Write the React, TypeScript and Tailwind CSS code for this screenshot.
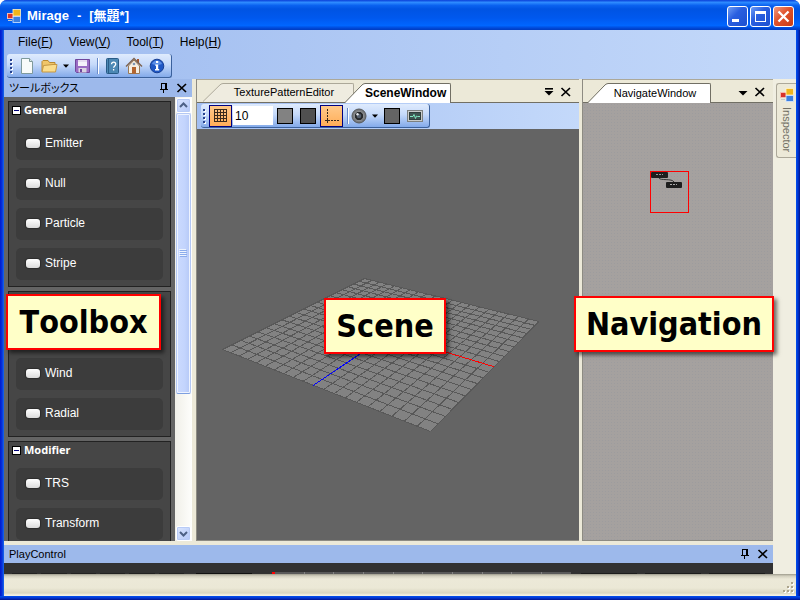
import React from "react";

const uiFont = "font-['Liberation_Sans','Noto_Sans_CJK_JP',sans-serif]";

/* ---------- small glyphs ---------- */

function Pin() {
  return (
    <svg className="h-3 w-3" viewBox="0 0 12 12" shapeRendering="crispEdges" fill="none" stroke="#000" aria-hidden="true">
      <path d="M3.5 1v6M3 1.5h5M8 1v6M7.5 1v6M2 7.5h8M5.5 8v3" />
    </svg>
  );
}

function Cross() {
  return (
    <svg className="h-3 w-3" viewBox="0 0 12 12" fill="none" stroke="#000" strokeWidth="1.7" aria-hidden="true">
      <path d="M1.5 2 10 10M10 2 1.5 10" />
    </svg>
  );
}

function Arrow() {
  return (
    <svg className="h-1 w-2 shrink-0" viewBox="0 0 8 4" aria-hidden="true">
      <path d="M1 0.5h6L4 3.7z" fill="#000" />
    </svg>
  );
}

function TabMenuArrow({ bar }: { bar?: boolean }) {
  return (
    <svg className="h-3 w-3" viewBox="0 0 12 12" aria-hidden="true">
      {bar && <path d="M2 2h8v1.6H2z" />}
      <path d="M1.5 5h9L6 9.5z" />
    </svg>
  );
}

function IconButton({ label, children }: { label: string; children: React.ReactNode }) {
  return (
    <button aria-label={label} className="flex shrink-0 items-center justify-center">
      {children}
    </button>
  );
}

function FormIcon({ className }: { className: string }) {
  return (
    <svg className={className} viewBox="0 0 14 14" aria-hidden="true">
      <rect x="0.5" y="4.5" width="6" height="5" fill="#d8322a" stroke="#f2b8b0" />
      <rect x="6" y="0.5" width="7.5" height="6.5" fill="#f0b51c" stroke="#fff3c8" strokeWidth="0.8" />
      <rect x="6" y="7.5" width="7.5" height="6" fill="#3c7fe0" stroke="#d6e6ff" strokeWidth="0.8" />
      <path d="M1 11.5h4" stroke="#c8c8c8" />
    </svg>
  );
}

/* ---------- title bar ---------- */

function TitleBar() {
  const btn = "flex h-[21px] w-[21px] items-center justify-center rounded-[3px] border border-white";
  return (
    <header className="flex h-[30px] shrink-0 items-center bg-[linear-gradient(180deg,#0a3fd8_0%,#2e8bff_8%,#0a62f0_18%,#0054e3_30%,#0058ee_60%,#0066ff_85%,#0047d6_94%,#003cc0_100%)] pl-[7px] pr-[6px] pt-[2px]">
      <FormIcon className="h-[14px] w-[14px]" />
      <h1 className="ml-[6px] flex flex-1 gap-2 text-[13px] font-bold leading-4 text-white">
        <span>Mirage</span>
        <span>-</span>
        <span>[無題*]</span>
      </h1>
      <div className="flex gap-[2px]">
        <button aria-label="Minimize" className={`${btn} bg-[linear-gradient(135deg,#6f9df5,#2a5fe0_40%,#1c4fd0)]`}>
          <svg className="h-[19px] w-[19px]" viewBox="0 0 19 19"><path d="M4 12h7v3H4z" fill="#fff" /></svg>
        </button>
        <button aria-label="Maximize" className={`${btn} bg-[linear-gradient(135deg,#6f9df5,#2a5fe0_40%,#1c4fd0)]`}>
          <svg className="h-[19px] w-[19px]" viewBox="0 0 19 19"><path d="M4 4h11v11H4zM5 7v7h9V7z" fillRule="evenodd" fill="#fff" /></svg>
        </button>
        <button aria-label="Close" className={`${btn} bg-[linear-gradient(135deg,#f09a80,#e0522c_45%,#c83c14)]`}>
          <svg className="h-[19px] w-[19px]" viewBox="0 0 19 19" fill="none" stroke="#fff" strokeWidth="2.3"><path d="M4.5 4.5l10 10M14.5 4.5l-10 10" /></svg>
        </button>
      </div>
    </header>
  );
}

/* ---------- menu and main toolbar ---------- */

const menus = [
  { name: "File", key: "F" },
  { name: "View", key: "V" },
  { name: "Tool", key: "T" },
  { name: "Help", key: "H" },
];

function MenuBar() {
  return (
    <nav className="flex h-6 items-center gap-4 pl-[14px] text-[12px] leading-4">
      {menus.map((m) => (
        <button key={m.name}>
          {m.name}(<u>{m.key}</u>)
        </button>
      ))}
    </nav>
  );
}

function Grip() {
  return (
    <svg className="h-4 w-[3px] shrink-0" viewBox="0 0 3 16" shapeRendering="crispEdges" aria-hidden="true">
      {[1, 5, 9, 13].map((y) => (
        <g key={y}>
          <rect x="1" y={y + 1} width="2" height="2" fill="#fff" />
          <rect x="0" y={y} width="2" height="2" fill="#27418e" />
        </g>
      ))}
    </svg>
  );
}

function Separator() {
  return <span className="h-4 w-[2px] shrink-0 border-l border-r border-l-[#6a8ccb] border-r-white" />;
}

const strip =
  "flex h-6 items-center rounded-[3px] border-b border-r border-[#3b619c] bg-[linear-gradient(180deg,#dfebfd,#c6dafa_45%,#83aaea)]";

function MainToolbar() {
  return (
    <div className="flex h-[25px] items-start pl-[3px]">
      <div className={`${strip} w-[165px] pl-[3px]`}>
        <Grip />
        <div className="ml-[7px] flex items-center">
          <IconButton label="New">
            <svg className="h-4 w-[14px]" viewBox="0 0 14 16">
              <path d="M1.5.5h8l3 3v12h-11z" fill="#f8fbfa" stroke="#7f9a9c" />
              <path d="M9.500.5v3h3" fill="#dcebea" stroke="#7f9a9c" />
            </svg>
          </IconButton>
        </div>
        <div className="ml-[7px] flex items-center gap-1">
          <IconButton label="Open">
            <svg className="h-4 w-[17px]" viewBox="0 0 17 16">
              <path d="M1 13.500V3.500L2 2.500h5l1.500 2H14v3" fill="#f0c66a" stroke="#b98a32" />
              <path d="M2.500 7.500 12 6.500h4L14.500 14H1z" fill="#fbdd8c" stroke="#c59743" />
            </svg>
          </IconButton>
          <IconButton label="Open recent"><Arrow /></IconButton>
        </div>
        <div className="ml-[5px] flex items-center gap-[7px]">
          <IconButton label="Save">
            <svg className="h-4 w-[15px]" viewBox="0 0 15 16">
              <path d="M.5 1.500h14v13H1.500l-1-1z" fill="#9a6cc4" stroke="#6f479c" />
              <rect x="3" y="2" width="9" height="6" fill="#f4f1fa" />
              <path d="M3 3h9" stroke="#d6c6e6" />
              <rect x="3.500" y="10" width="8" height="4.500" fill="#d9d3e2" />
              <rect x="5" y="11" width="2" height="3" fill="#6f479c" />
            </svg>
          </IconButton>
          <Separator />
          <IconButton label="Manual">
            <svg className="h-4 w-[13px]" viewBox="0 0 13 16">
              <rect x="0.500" y="0.500" width="12" height="15" rx="1" fill="#4c88b4" stroke="#285b86" />
              <path d="M2.500 1v14" stroke="#2a5d88" />
              <path d="M5.500 6.200c0-2.700 4.200-2.600 4.200 0 0 1.700-2.100 1.700-2.100 3.600M7.600 11v1.500" fill="none" stroke="#fff" strokeWidth="1.300" />
            </svg>
          </IconButton>
        </div>
        <div className="ml-[6px] flex items-center gap-[6px]">
          <IconButton label="Home">
            <svg className="h-[18px] w-[18px]" viewBox="0 0 18 18">
              <path d="M3.500 9v7.500h11V9L9 3z" fill="#f6efe2" stroke="#9b7a55" />
              <path d="M12 2h2v5l-2-2z" fill="#a5562e" />
              <path d="M1 9.500 9 1.500l8 8" fill="none" stroke="#7d624e" strokeWidth="1.400" />
              <rect x="7" y="10" width="4" height="6.500" fill="#b4652e" />
              <circle cx="9" cy="7" r="1.300" fill="#7c97b5" />
            </svg>
          </IconButton>
          <IconButton label="About">
            <svg className="h-4 w-4" viewBox="0 0 16 16">
              <circle cx="8" cy="8" r="6.800" fill="#1f57c4" stroke="#173f94" />
              <path d="M3 6a5.300 5.300 0 0 1 10 0Q8 8 3 6z" fill="#5b8ee6" />
              <path d="M7 3h2.200v2H7zM6.200 6.500h3V11h1v1.400H6V11h1V7.700h-.8z" fill="#fff" />
            </svg>
          </IconButton>
        </div>
      </div>
    </div>
  );
}

/* ---------- toolbox ---------- */

type Group = { title?: string; items: string[] };

const groups: Group[] = [
  { title: "General", items: ["Emitter", "Null", "Particle", "Stripe"] },
  { items: ["Wind", "Radial"] },
  { title: "Modifier", items: ["TRS", "Transform"] },
];

function ToolGroup({ title, items }: Group) {
  return (
    <section className="flex shrink-0 flex-col border border-[#222] bg-[#464646] px-[7px] pb-[6px]">
      {title ? (
        <h3 className="-ml-1 flex h-[26px] items-start gap-[3px] text-[12px] font-bold leading-4 text-white">
          <button aria-label={`Collapse ${title}`} className="mt-1 flex h-[9px] w-[9px] items-center justify-center border border-black bg-white">
            <span className="h-px w-[5px] bg-[#00007b]" />
          </button>
          <span className="font-['Noto_Sans',sans-serif] text-[11px]">{title}</span>
        </h3>
      ) : (
        <div className="h-[66px]" />
      )}
      <ul className="flex flex-col gap-2">
        {items.map((item) => (
          <li key={item}>
            <button className="flex h-8 w-full items-center gap-[5px] rounded-[5px] bg-[#3c3c3c] pb-[2px] pl-[10px] text-[12px] leading-4 text-white">
              <span className="h-[9px] w-[14px] rounded-[3px] bg-[linear-gradient(180deg,#fff,#dcdcdc)] shadow-[0_0_1px_1px_#2c2c2c]" />
              {item}
            </button>
          </li>
        ))}
      </ul>
    </section>
  );
}

function ScrollBar() {
  const btn =
    "flex h-[15px] w-[15px] shrink-0 items-center justify-center rounded-[2px] border border-white bg-[linear-gradient(135deg,#dbe6ff,#b4c8f8)] shadow-[inset_0_0_0_1px_#b8cbf6]";
  return (
    <div className="flex w-[17px] shrink-0 flex-col items-center bg-[linear-gradient(90deg,#f0efe8,#fefefc)] pt-px">
      <button aria-label="Scroll up" className={btn}>
        <svg className="h-[9px] w-[9px]" viewBox="0 0 9 9" fill="none" stroke="#4d6185" strokeWidth="2"><path d="M1 6 4.500 2.500 8 6" /></svg>
      </button>
      <div className="flex min-h-0 w-full flex-1 flex-col items-center">
        <div className="flex h-[68%] w-[15px] flex-col items-center justify-center gap-px rounded-[2px] border border-[#b4c8f4] border-b-[#7d9fe0] bg-[linear-gradient(90deg,#cbdafe,#c3d4fd_60%,#b5c8f6)] shadow-[inset_0_0_0_1px_#eef3ff]">
          {[0, 1, 2, 3].map((n) => (
            <span key={n} className="h-px w-[7px] bg-[#8cacec] shadow-[-1px_-1px_0_#eef4fe]" />
          ))}
        </div>
      </div>
      <button aria-label="Scroll down" className={btn}>
        <svg className="h-[9px] w-[9px]" viewBox="0 0 9 9" fill="none" stroke="#4d6185" strokeWidth="2"><path d="M1 3 4.500 6.500 8 3" /></svg>
      </button>
    </div>
  );
}

function PaneHeader({ title }: { title: string }) {
  return (
    <div className="flex h-[18px] shrink-0 items-center bg-[#9db9eb] pl-[5px] pr-1">
      <h2 className="flex-1 text-[11px] leading-4 [font-feature-settings:'palt']">{title}</h2>
      <div className="flex gap-[6px]">
        <IconButton label={`Auto hide ${title}`}><Pin /></IconButton>
        <IconButton label={`Close ${title}`}><Cross /></IconButton>
      </div>
    </div>
  );
}

function Callout({ text, place }: { text: string; place: string }) {
  return (
    <div
      className={`absolute z-10 flex h-[56px] items-center justify-center border-2 border-[#f00] bg-[#ffffc8] px-[10px] font-['DejaVu_Sans_Condensed','DejaVu_Sans',sans-serif] text-[32px] font-bold leading-10 shadow-[3px_3px_4px_rgba(0,0,0,0.55)] [font-kerning:none] ${place}`}
    >
      {text}
    </div>
  );
}

function Toolbox() {
  return (
    <aside className="relative flex w-[188px] shrink-0 flex-col">
      <PaneHeader title="ツールボックス" />
      <div className="flex min-h-0 flex-1">
        <div className="flex min-w-0 flex-1 flex-col gap-1 overflow-hidden bg-[#646464] px-1 pt-1">
          {groups.map((g, i) => (
            <ToolGroup key={i} {...g} />
          ))}
        </div>
        <ScrollBar />
      </div>
      <Callout text="Toolbox" place="left-[2px] top-[215px] min-w-[155px]" />
    </aside>
  );
}

/* ---------- document tabs ---------- */

function Tab({ label, active, bold, className = "" }: { label: string; active?: boolean; bold?: boolean; className?: string }) {
  const fill = active ? "#ffffff" : "#efece0";
  const line = active ? "#716f64" : "#aca899";
  return (
    <button className={`flex shrink-0 ${active ? "relative h-5" : "mb-px h-[19px]"} ${className}`}>
      <svg className="h-full w-5 shrink-0" viewBox="0 0 20 20" preserveAspectRatio="none" aria-hidden="true">
        <path d="M0 20 16 3Q18 .5 20 .5V20z" fill={fill} />
        <path d="M0 19.500 16 3Q18 .5 20 .5" fill="none" stroke={line} />
      </svg>
      <span
        className={`flex h-full flex-1 items-center justify-center rounded-tr-[2px] border-r border-t pb-[2px] leading-4 ${
          active ? "border-[#716f64] bg-white" : "border-[#aca899] bg-[#efece0]"
        } ${bold ? "pr-1 text-[12px] font-bold" : "pr-2 text-[11px]"}`}
      >
        {label}
      </span>
    </button>
  );
}

function TabBar({ children, bar }: { children: React.ReactNode; bar?: boolean }) {
  return (
    <div className="flex h-6 shrink-0 items-end border-t border-[#aca899] bg-[#ece9d8] shadow-[inset_0_-1px_0_#716f64]">
      {children}
      <div className="ml-auto flex gap-[5px] pb-[5px] pr-[7px]">
        <IconButton label="Window list"><TabMenuArrow bar={bar} /></IconButton>
        <IconButton label="Close window"><Cross /></IconButton>
      </div>
    </div>
  );
}

/* ---------- scene ---------- */

const DIVISIONS = 20;

type Point = [number, number];

/* Floor corners in view space: back, right, front, left. */
const corners: Point[] = [
  [167.5, 149.5],
  [342, 192.5],
  [233.5, 302.5],
  [25.5, 220.5],
];

/* Perspective mapping from the unit square onto the floor. */
function project(u: number, v: number): Point {
  const [[x0, y0], [x1, y1], [x2, y2], [x3, y3]] = corners;
  const dx1 = x1 - x2, dx2 = x3 - x2, sx = x0 - x1 + x2 - x3;
  const dy1 = y1 - y2, dy2 = y3 - y2, sy = y0 - y1 + y2 - y3;
  const det = dx1 * dy2 - dx2 * dy1;
  const g = (sx * dy2 - dx2 * sy) / det;
  const h = (dx1 * sy - sx * dy1) / det;
  const w = g * u + h * v + 1;
  return [
    ((x1 - x0 + g * x1) * u + (x3 - x0 + h * x3) * v + x0) / w,
    ((y1 - y0 + g * y1) * u + (y3 - y0 + h * y3) * v + y0) / w,
  ];
}

function segment(a: Point, b: Point) {
  return `M${a[0].toFixed(1)} ${a[1].toFixed(1)}L${b[0].toFixed(1)} ${b[1].toFixed(1)}`;
}

function SceneView() {
  const lines: string[] = [];
  for (let i = 0; i <= DIVISIONS; i++) {
    const t = i / DIVISIONS;
    lines.push(segment(project(t, 0), project(t, 1)), segment(project(0, t), project(1, t)));
  }
  return (
    <svg className="h-full w-full" viewBox="0 0 382 411" role="img" aria-label="Scene floor" shapeRendering="crispEdges">
      <polygon points={corners.map((c) => c.join(",")).join(" ")} fill="#828282" />
      <path d={lines.join("")} stroke="#585858" fill="none" />
      <path d={segment(project(0.5, 0.5), project(0.5, 1))} stroke="#0000ff" />
      <path d={segment(project(0.5, 0.5), project(1, 0.5))} stroke="#ff0000" />
    </svg>
  );
}

const checked = "flex h-[22px] w-[23px] shrink-0 items-center justify-center border border-[#000080] bg-[linear-gradient(180deg,#ffc98a,#ffad58)]";

function SceneToolbar() {
  return (
    <div className="flex h-[26px] shrink-0 items-start bg-[linear-gradient(90deg,#a3bff2,#c4d9fa)] pl-1 pt-px">
      <div className={`${strip} w-[229px] pl-[2px]`}>
        <Grip />
        <button aria-label="Show grid" className={`${checked} ml-[3px]`}>
          <svg className="h-[13px] w-[13px]" viewBox="0 0 13 13" shapeRendering="crispEdges" fill="none" stroke="#3a2a1c">
            <path d="M0 .5h13M0 3.500h13M0 6.500h13M0 9.500h13M0 12.500h13M.5 0v13M3.500 0v13M6.500 0v13M9.500 0v13M12.500 0v13" />
          </svg>
        </button>
        <input aria-label="Grid size" defaultValue="10" className="ml-px h-[19px] w-10 shrink-0 bg-white pl-[2px] text-[12px] leading-4 outline-none" />
        <button aria-label="Grid color" className="ml-1 h-4 w-4 shrink-0 border border-black bg-[#828282]" />
        <button aria-label="Line color" className="ml-[7px] h-4 w-4 shrink-0 border border-black bg-[#505050]" />
        <button aria-label="Show axis" className={`${checked} ml-1`}>
          <svg className="h-4 w-4" viewBox="0 0 16 16" shapeRendering="crispEdges" fill="none" stroke="#3a2a1c">
            <path d="M3.500 1v14" strokeDasharray="2 1" />
            <path d="M1 12.500h15" strokeDasharray="2 1" />
            <path d="M2 12.500h3" />
          </svg>
        </button>
        <span className="ml-1 flex items-center"><Separator /></span>
        <button aria-label="Camera" className="ml-[2px] shrink-0">
          <svg className="h-4 w-4" viewBox="0 0 16 16">
            <circle cx="8" cy="8" r="7" fill="#77797c" stroke="#54575a" />
            <circle cx="8" cy="8" r="4.700" fill="#26282b" stroke="#a5a8ab" strokeWidth="0.800" />
            <circle cx="8" cy="8" r="2.300" fill="#56606e" />
            <circle cx="6.500" cy="6.200" r="1.200" fill="#e4e8ee" />
          </svg>
        </button>
        <button aria-label="Camera list" className="ml-1 shrink-0"><Arrow /></button>
        <button aria-label="Background color" className="ml-[5px] h-4 w-4 shrink-0 border border-black bg-[#646464]" />
        <button aria-label="Statistics" className="ml-[7px] shrink-0">
          <svg className="h-4 w-4" viewBox="0 0 16 16">
            <rect x="0.500" y="2.500" width="15" height="11" fill="#c9cccb" stroke="#7c8080" />
            <rect x="2.500" y="4.500" width="11" height="7" fill="#3d5450" stroke="#2f3d3b" />
            <path d="M3 8.500h3l1-2 1.500 4 1-2.500 1 .5H13" fill="none" stroke="#7fe6bf" />
          </svg>
        </button>
      </div>
    </div>
  );
}

function SceneWindow() {
  return (
    <main className="relative flex min-w-0 flex-1 flex-col border-b border-l border-[#8d8b82] bg-[#646464]">
      <TabBar bar>
        <Tab label="TexturePatternEditor" className="ml-[6px] w-[151px]" />
        <Tab label="SceneWindow" active bold className="-ml-[9px] w-[105px]" />
      </TabBar>
      <SceneToolbar />
      <div className="min-h-0 flex-1">
        <SceneView />
      </div>
      <Callout text="Scene" place="left-1/3 top-[219px]" />
    </main>
  );
}

/* ---------- navigation ---------- */

function NavigateWindow() {
  return (
    <section className="relative flex w-[191px] shrink-0 flex-col border-b border-l border-[#8d8b82] bg-[#a5a19f]">
      <TabBar>
        <Tab label="NavigateWindow" active className="ml-[5px] w-[123px]" />
      </TabBar>
      <div className="relative flex-1 bg-[radial-gradient(#9d9c9e_1px,transparent_1px)] bg-[length:3px_3px]">
        <div className="absolute left-[67px] top-[68px] h-[42px] w-[39px] border border-[#f00]">
          <svg className="h-10 w-[37px]" viewBox="0 0 37 40" role="img" aria-label="Node overview">
            <rect x="0" y="0" width="17" height="6" rx="1" fill="#1e1e1e" />
            <path d="M5 2.500h7" stroke="#999" strokeDasharray="2 1" />
            <path d="M8 6c1 3 13 0 15 4" fill="none" stroke="#333" />
            <rect x="15" y="10" width="16" height="6" rx="1" fill="#1e1e1e" />
            <path d="M19 12.500h7" stroke="#aaa" strokeDasharray="2 1" />
          </svg>
        </div>
      </div>
      <Callout text="Navigation" place="-right-px top-[217px]" />
    </section>
  );
}

function InspectorStrip() {
  return (
    <div className="flex w-[23px] shrink-0 flex-col items-end bg-[#f0eee1] pt-1">
      <button className="flex h-[75px] w-5 flex-col items-center gap-[5px] rounded-l-[3px] border border-r-0 border-[#aca899] bg-[#ece9d8] pt-1">
        <FormIcon className="h-[14px] w-[14px]" />
        <span className="text-[11px] leading-3 text-[#716f64] [writing-mode:vertical-rl]">Inspector</span>
      </button>
    </div>
  );
}

/* ---------- play control and status ---------- */

function PlayControl() {
  return (
    <section className="mt-1 shrink-0">
      <PaneHeader title="PlayControl" />
      <div className="flex h-[11px] items-end bg-[#323232] pl-2">
        <div className="flex w-[184px] gap-1 pr-3">
          {[0, 1, 2, 3, 4, 5].map((n) => (
            <span key={n} className="h-px flex-1 bg-[#222]" />
          ))}
        </div>
        <span className="h-px w-14 bg-[#111]" />
        <div className="ml-5 flex h-[2px] w-[299px] bg-[#5a5a5a]">
          <span className="w-[3px] bg-[#f00]" />
          {[0, 1, 2, 3, 4, 5, 6, 7, 8].map((n) => (
            <span key={n} className="flex-1 border-r border-[#828282]" />
          ))}
          <span className="w-[29px]" />
        </div>
        <div className="ml-[10px] flex flex-1 gap-2 pr-2">
          {[0, 1, 2].map((n) => (
            <span key={n} className="h-px flex-1 bg-[#1c1c1c]" />
          ))}
        </div>
      </div>
    </section>
  );
}

function StatusBar() {
  return (
    <footer className="flex h-[22px] shrink-0 items-end justify-end bg-[linear-gradient(180deg,#9d9b8c_0,#d2cfbe_2px,#ece9d8_5px,#ebe8d6_14px,#d8d5c0_19px,#f2efe2_21px)] pb-[2px] pr-px">
      <svg className="h-3 w-3" viewBox="0 0 12 12" shapeRendering="crispEdges" aria-hidden="true">
        {[[8, 0], [4, 4], [8, 4], [0, 8], [4, 8], [8, 8]].map(([x, y]) => (
          <g key={`${x}-${y}`}>
            <rect x={x + 1} y={y + 1} width="2" height="2" fill="#fff" />
            <rect x={x} y={y} width="2" height="2" fill="#aca48c" />
          </g>
        ))}
      </svg>
    </footer>
  );
}

export default function App() {
  return (
    <div className={`${uiFont} flex h-screen flex-col overflow-hidden rounded-t-[7px] bg-[#0a46e0] text-black`}>
      <TitleBar />
      <div className="flex min-h-0 flex-1">
        <div className="w-1 shrink-0 bg-[linear-gradient(90deg,#0019cf,#0831d9,#166aee)]" />
        <div className="flex min-w-0 flex-1 flex-col bg-[#ece9d8]">
          <div className="shrink-0 bg-[linear-gradient(90deg,#9ebbef,#c4d9fa)]">
            <MenuBar />
            <MainToolbar />
          </div>
          <div className="flex min-h-0 flex-1">
            <div className="flex min-w-0 flex-1 flex-col">
              <div className="flex min-h-0 flex-1">
                <Toolbox />
                <div className="w-1 shrink-0 bg-[#ece9d8]" />
                <SceneWindow />
                <div className="w-[3px] shrink-0 bg-[#ece9d8]" />
                <NavigateWindow />
              </div>
              <PlayControl />
            </div>
            <InspectorStrip />
          </div>
          <StatusBar />
        </div>
        <div className="w-1 shrink-0 bg-[linear-gradient(90deg,#0050f0,#0034d0,#00138c)]" />
      </div>
      <div className="h-1 shrink-0 bg-[linear-gradient(180deg,#0050f0,#0034d0,#00138c)]" />
    </div>
  );
}
